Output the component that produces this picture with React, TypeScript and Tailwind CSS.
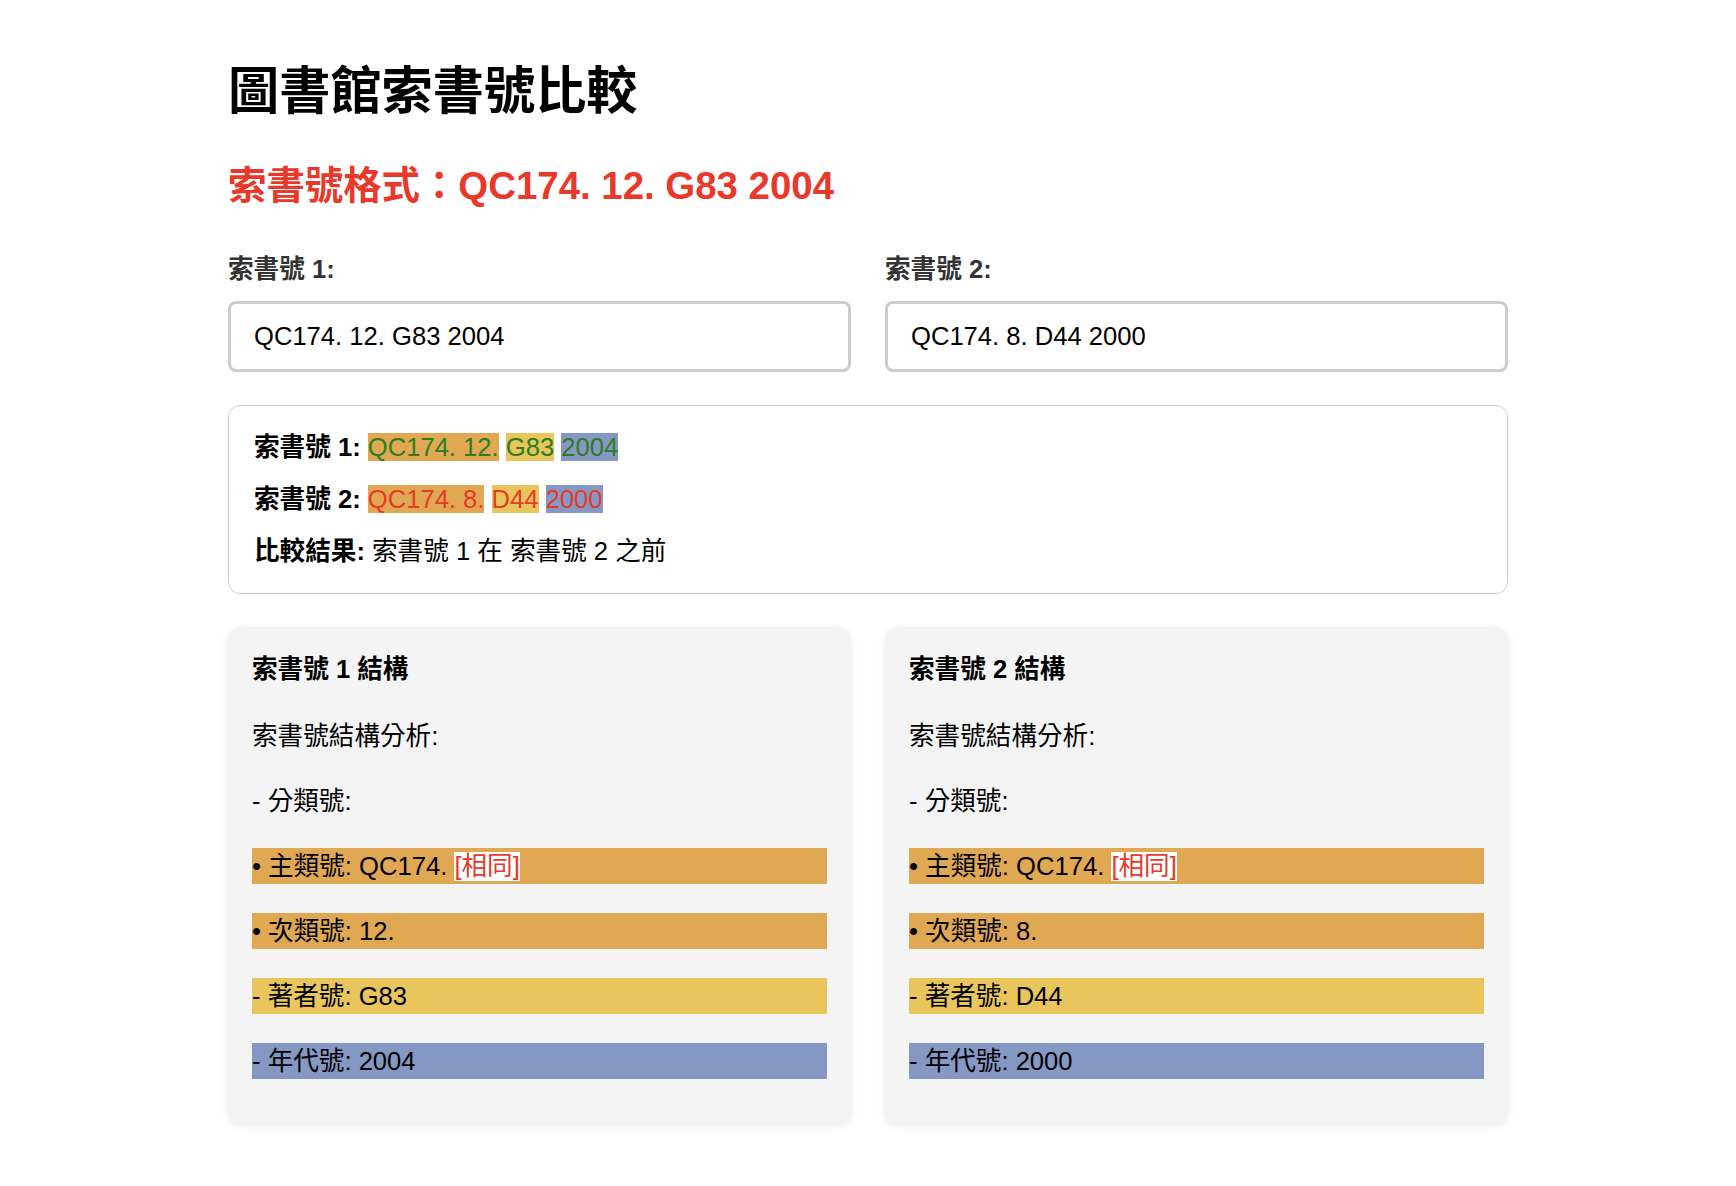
import React from "react"

type Part = { text: string; bg: string }

const call1: Part[] = [
    { text: "QC174. 12.", bg: "bg-[#e0a853]" },
    { text: "G83", bg: "bg-[#e8c65c]" },
    { text: "2004", bg: "bg-[#8598c4]" },
]

const call2: Part[] = [
    { text: "QC174. 8.", bg: "bg-[#e0a853]" },
    { text: "D44", bg: "bg-[#e8c65c]" },
    { text: "2000", bg: "bg-[#8598c4]" },
]

function Highlighted({ parts, color }: { parts: Part[]; color: string }) {
    return (
        <>
            {parts.map((p, i) => (
                <React.Fragment key={i}>
                    {i > 0 && " "}
                    <span className={`${p.bg} ${color}`}>{p.text}</span>
                </React.Fragment>
            ))}
        </>
    )
}

function StructureCard({ n, sub, author, year }: { n: number; sub: string; author: string; year: string }) {
    const row = "flex h-[36px] items-center whitespace-pre"
    return (
        <div className="rounded-[12px] bg-[#f4f4f4] px-[24px] pt-[28px] pb-[44px] shadow-[0_3px_8px_rgba(0,0,0,0.08)]">
            <h3 className="mb-[34px] text-[25.6px] font-bold leading-[29px] text-black">索書號 {n} 結構</h3>
            <div className="flex flex-col gap-[29px] text-[25.6px] leading-[29px] text-black">
                <div className={row}>索書號結構分析:</div>
                <div className={row}>- 分類號:</div>
                <div className={`${row} bg-[#e0a853]`}>
                    • 主類號: QC174. <span className="bg-white text-[#e8392a]">[相同]</span>
                </div>
                <div className={`${row} bg-[#e0a853]`}>• 次類號: {sub}</div>
                <div className={`${row} bg-[#e8c65c]`}>- 著者號: {author}</div>
                <div className={`${row} bg-[#8598c4]`}>- 年代號: {year}</div>
            </div>
        </div>
    )
}

export default function App() {
    return (
        <div className="min-h-screen bg-white font-['Liberation_Sans','Noto_Sans_CJK_TC',sans-serif]">
            <div className="mx-auto w-[1280px] pt-[63px] pb-[60px]">
                <h1 className="text-[51.2px] font-bold leading-[58px] text-black">圖書館索書號比較</h1>
                <h2 className="mt-[43px] text-[38.4px] font-bold leading-[44px] text-[#e8392a]">
                    索書號格式：QC174. 12. G83 2004
                </h2>

                <div className="mt-[47px] grid grid-cols-2 gap-[34px]">
                    {[
                        { label: "索書號 1:", value: "QC174. 12. G83 2004" },
                        { label: "索書號 2:", value: "QC174. 8. D44 2000" },
                    ].map((f) => (
                        <div key={f.label}>
                            <label className="block text-[25.6px] font-bold leading-[29px] text-[#333]">{f.label}</label>
                            <input
                                readOnly
                                defaultValue={f.value}
                                className="mt-[17px] block h-[71px] w-full rounded-[8px] border-[3px] border-[#cccccc] bg-white px-[23px] text-[25.6px] text-black outline-none"
                            />
                        </div>
                    ))}
                </div>

                <div className="mt-[33px] flex flex-col gap-[23px] rounded-[12px] border border-[#cccccc] px-[25px] pt-[27px] pb-[27px] text-[25.6px] leading-[29px] text-black">
                    <p>
                        <strong>索書號 1:</strong> <Highlighted parts={call1} color="text-[#2e7d22]" />
                    </p>
                    <p>
                        <strong>索書號 2:</strong> <Highlighted parts={call2} color="text-[#e8392a]" />
                    </p>
                    <p>
                        <strong>比較結果:</strong> 索書號 1 在 索書號 2 之前
                    </p>
                </div>

                <div className="mt-[33px] grid grid-cols-2 gap-[34px]">
                    <StructureCard n={1} sub="12." author="G83" year="2004" />
                    <StructureCard n={2} sub="8." author="D44" year="2000" />
                </div>
            </div>
        </div>
    )
}
